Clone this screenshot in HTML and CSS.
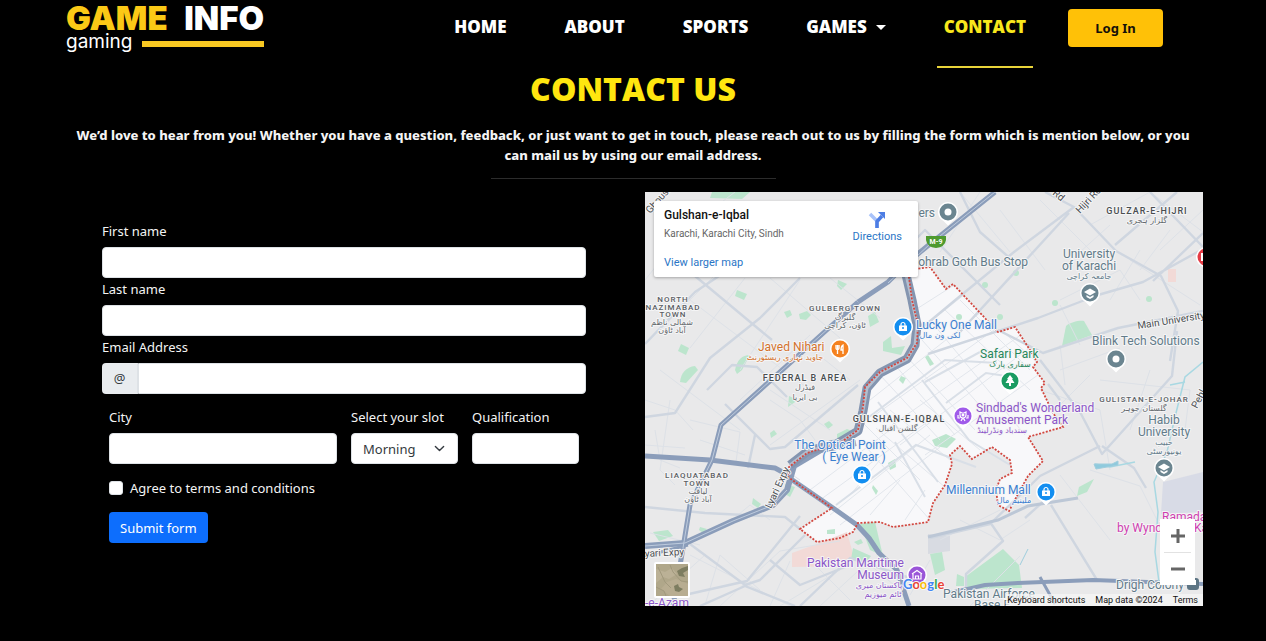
FILE: index.html
```html
<!DOCTYPE html>
<html lang="en">
<head>
<meta charset="utf-8">
<title>Game Info - Contact</title>
<meta name="viewport" content="width=device-width, initial-scale=1">
<link rel="stylesheet" href="styles.css">
</head>
<body>
<header class="site-header">
  <a class="logo" href="#">
    <span class="logo-name"><span class="logo-gold">GAME</span> <span>INFO</span></span>
    <span class="logo-sub"><span>gaming</span><span class="logo-bar"></span></span>
  </a>
  <nav class="nav">
    <a class="nav-link" href="#">HOME</a>
    <a class="nav-link" href="#">ABOUT</a>
    <a class="nav-link" href="#">SPORTS</a>
    <a class="nav-link" href="#">GAMES<span class="caret"></span></a>
    <a class="nav-link active" href="#">CONTACT</a>
  </nav>
  <button class="login" type="button">Log In</button>
</header>

<main class="container">
  <h1 class="title">CONTACT US</h1>
  <p class="lead">We’d love to hear from you! Whether you have a question, feedback, or just want to get in touch, please reach out to us by filling the form which is mention below, or you can mail us by using our email address.</p>
  <hr class="rule">

  <div class="columns">
    <form class="form">
      <label class="label" for="first">First name</label>
      <input class="control" id="first" type="text">
      <label class="label" for="last">Last name</label>
      <input class="control" id="last" type="text">
      <label class="label" for="email">Email Address</label>
      <div class="input-group">
        <span class="addon">@</span>
        <input class="control" id="email" type="text">
      </div>
      <div class="row">
        <div class="cell">
          <label class="label" for="city">City</label>
          <input class="control" id="city" type="text">
        </div>
        <div class="cell">
          <label class="label" for="slot">Select your slot</label>
          <div class="select-wrap">
            <select class="control select" id="slot"><option>Morning</option><option>Evening</option></select>
            <svg class="chevron" viewBox="0 0 16 16" aria-hidden="true"><path d="m2 5 6 6 6-6" fill="none" stroke="#343a40" stroke-width="2" stroke-linecap="round" stroke-linejoin="round"/></svg>
          </div>
        </div>
        <div class="cell">
          <label class="label" for="qual">Qualification</label>
          <input class="control" id="qual" type="text">
        </div>
      </div>
      <div class="check">
        <input class="checkbox" id="agree" type="checkbox">
        <label for="agree">Agree to terms and conditions</label>
      </div>
      <button class="submit" type="submit">Submit form</button>
    </form>

    <section class="map" aria-label="Map">
      <svg class="map-canvas" viewBox="645 192 558 414" preserveAspectRatio="xMidYMid slice">
        <defs>
          <clipPath id="area"><path d="M908 270 930 267 946 289 953 284 998 332 1015 327 1030 350 1037 362 1033 367 1045 383 1041 388 1053 413 1063 427 1028 437 1043 461 1028 476 1018 494 1009 511 998 505 996 490 1000 479 1012 473 1010 460 992 447 972 459 960 446 950 455 952 464 945 485 933 503 928 522 893 527 880 522 858 523 853 532 840 538 817 542 800 529 832 508 788 477 789 467 807 453 840 443 858 430 863 407 865 387 880 372 907 358 917 343 918 325 912 300Z"/></clipPath>
          <g id="pin"><path d="M0 13.500-4.500 9A10 10 0 1 1 4.500 9Z" fill="#fff"/><circle r="8.500"/></g>
        </defs>
        <rect x="645" y="192" width="558" height="414" fill="#e9e9ea"/>
        <g clip-path="url(#area)"><rect x="780" y="260" width="300" height="290" fill="#f8f8fa"/></g>

        <g fill="#f2dad7">
          <path d="m792 553 25-9 30-12 6 22-3 12-58 1Z"/>
          <path d="m1168 269 8 0 0 13-8 0Z"/>
        </g>
        <path d="m1163 482 40-10v40l-42 2Z" fill="#d8dbe6"/>
        <path d="m928 534 22 2v15l-22 3Z" fill="#d8dbe2"/>
        <g fill="#bce5cd">
          <path d="m712 192 38 0-8 7-32-1Z"/><path d="m737 290 10 4-3 6-9-4Z"/><path d="m838 280 9 4-6 6-4-4Z"/>
          <path d="m799 314 8-3 4 4-5 5-6-1Z"/><path d="m868 316 7-4 4 10-9 5Z"/><path d="m681 344 8 4-3 7-8-4Z"/>
          <path d="m680 382c1-9 6-15 15-16l3 4-12 13Z"/><path d="m735 370c2-10 7-15 15-15l-8 15-5 4Z"/>
          <path d="m883 342 8-6 1 12 13-2-4 9-18-4Z"/><path d="m784 312 6-2 2 5-5 3Z"/><path d="m901 376 5 2-3 6-4-4Z"/>
          <path d="m770 433 4-3 3 4-6 4Z"/><path d="m789 396 9 4-10 7Z"/><path d="m824 424 5-3 4 4-5 4Z"/>
          <path d="m837 434 10-5 10 4-5 7-15-2Z"/><path d="m785 484 10 3-5 10-5-3Z"/><path d="m753 498 8 6-3 4-6-4Z"/>
          <path d="m653 532 15-2 5 6-14 5Z"/><path d="m700 527 7 2-4 4-4-3Z"/><path d="m888 463 7-4 1 8-6 3Z"/>
          <path d="m873 485 5 6-2 4-4-7Z"/><path d="m827 530 8-1v5h-8Z"/><path d="m860 524 15-2 8 34-13-6Z"/>
          <path d="m853 548 18 8-6 8-14-5Z"/><path d="m854 542 7-3 2 4-5 2Z"/><path d="m932 440 14-6 10 5-9 9-12-2Z"/>
          <path d="m928 355 6 9-4 2-5-9Z"/><path d="m1066 326c4-4 14-6 18-5l8 14-30 11Z"/><path d="m1079 487 15-8-7 13-10 4Z"/>
          <path d="m1003 549 16 16 3 23-55 1-2-12Z"/><path d="m930 554 12-2 3 18-10 5Z"/><path d="m957 574 7 3v9h-8Z"/>
          <circle cx="985" cy="285" r="3"/><circle cx="1016" cy="273" r="3"/><circle cx="1055" cy="303" r="3"/><circle cx="1149" cy="299" r="3"/><circle cx="959" cy="317" r="3"/><circle cx="1000" cy="317" r="3"/>
        </g>

        <g fill="none" stroke="#dde1e7" stroke-width="1">
          <path d="m645 280 40-50 50-38M660 330l60-60 60 5M690 300l120 90M745 278l-55 70M770 278l70 60M800 280l-60 90M830 278l50 40M660 370l80 60M800 340l50 40M770 390l60 40M740 400l70-65M770 445l90-65"/>
          <path d="m645 400 30 10 18 20M655 430l5 30 20 8M670 400l-10 70 15 15M645 445l40 3M690 420l50 12-4 30M700 440l45 15M770 400l30 20 15 20M800 480l-15-10M720 530l30-25 20 15M690 555l100 51M700 545l-50-12"/>
          <path d="m720 606 60-55 60-10M760 590l-40-35-15 50M770 606l20-45M810 560l40 40M840 570l-60 36M870 560l-50 46M900 590l-30-25M655 600l50-45M930 560l-20 35M940 540l60-30M970 606l50-50"/>
          <path d="m960 192 50 60M980 192l-40 60M1000 210l45 60M1040 200l60 60M1060 270l50-45M1110 300l30-50M1150 192l53 40M1160 250l43-40M1130 260l70 45M1090 225l60-33M1060 300l60-30 20 30M1060 305l20 40M1170 230l-30 40"/>
          <path d="m1060 370 60-22M1040 390l60 20 10 60M1100 380l90 10-5 40M1150 370l-20 60M1060 345l5 40M1055 410l35-35M1090 470l50 16 20 40M1110 540l-50-65M960 520l40 20 30-20"/>
        </g>
        <g clip-path="url(#area)" fill="none" stroke="#e2e6ec" stroke-width="1">
          <path d="m820 500 110-80M830 515l100-80M840 525l100-78M810 490l80-60M860 440l70 80M876 428l70 60M890 410l60 50M920 400l60 50M880 460l-30 35M900 480l-30 35M925 490l-20 30"/>
          <path d="m870 400 120-95M875 415l140-100M885 430l140-98M900 445l140-105M925 455l120-85M880 375l60 65M895 365l60 70M905 355l70 75M922 340l75 85M930 320l95 115M945 310l85 80M960 300l70 70M915 310l55-35M920 330l50-40M860 420l60 60M990 320l50 45"/>
        </g>

        <g fill="none" stroke="#cfd6e0" stroke-width="2.400" stroke-linejoin="round">
          <path d="m645 344 50-52 24-16M695 276l60 50 17 14M645 417l30-4 35-55 50-40 40-40M707 390l25-25 25 2 30 30M725 404l45 45 15-2 73-62M755 435l-7 33M645 507l60 6 80 4 15 12M800 516l-53 65-67 15"/>
          <path d="m690 544 55 41 15-5 45-45M745 586l50 20M745 586l-45 20M770 560l30 25 50-20M800 606l50-48 60 20"/>
          <path d="m1045 192 29 15 42 44 45 25 17 35-8 50M1074 207l-60 45-55 45-36 30M1069 213l-110 120M1203 249l-60 33-45 13-60 23-110 36M998 330l45 23 75-25 85-17M960 192l20 40 40 35M1153 281l50-48"/>
          <path d="m1115 245 62-53M1150 192l53 55M1000 305l-75-75-25 25"/>
          <path d="m1040 360 40 52 22 42 70-78 5-45M1100 446l-60 30-50 48-60 14M1102 446l32 22 12 20M1060 400l-12-16M990 522l13 19-37 33v20M1051 505l46 75M1045 500l-20 18"/>
        </g>
        <path d="m922 380 47 60 41 25M878 402l60 80M865 420l80-60 52 3M925 382l55-30M836 505l80-60 60 22M895 442l30 55M1006 376l-20-3-40 30" fill="none" stroke="#d9dfe7" stroke-width="2"/>
        <path d="m928 537 70-17 30-14 50-8" fill="none" stroke="#bcc7d6" stroke-width="3"/>
        <g fill="none" stroke="#8b9dba" stroke-width="5" stroke-linejoin="round">
          <path d="m858 302 30-20 20-20 22-18 65-52"/>
          <path d="m858 302-28 25L721 425 712 460 690 505 683 548 673 606"/>
          <path d="m645 456 65 4 65 8 13 7"/>
          <path d="m788 477 45 31 24 17 12 13 10 15 18 17 12 36"/>
          <path d="m645 546 40-3 48-22 40-16 14-15 7-24 27-16 35-7" stroke-width="6"/>
          <path d="m950 593 35-8 33-2 75-3 110 4" stroke-width="4"/>
          <path d="m1040 577 15 27M645 556l43-11" stroke-width="3"/>
        </g>
        <g fill="none" stroke="#becbdd" stroke-width="1">
          <path d="M830 327 721 425 712 460 690 505 683 548M888 283l42-39 65-52M645 546l40-3 48-22 40-16 14-15"/>
        </g>
        <path d="m903 262 9 38 5 25-2 20-8 14-27 14-13 15-4 23-5 20-20 12-30 8-18 14" fill="none" stroke="#8495b0" stroke-width="9" stroke-linejoin="round"/>
        <path d="m903 262 9 38 5 25-2 20-8 14-27 14-13 15-4 23-5 20-20 12-30 8-18 14" fill="none" stroke="#b3bece" stroke-width="3"/>
        <path d="m1203 362-18 15-10 40-8 35-13 30 4 30-3 40 4 30M1135 462l-25 5-15-3M1170 385l15-3" fill="none" stroke="#a8d8e2" stroke-width="1.500"/>
        <path d="m1094 464 18 0 6-3v4l-22 4ZM1020 565l8-16" fill="#8fcadd" stroke="#9fcddd"/>
        <path d="M908 270 930 267 946 289 953 284 998 332 1015 327 1030 350 1037 362 1033 367 1045 383 1041 388 1053 413 1063 427 1028 437 1043 461 1028 476 1018 494 1009 511 998 505 996 490 1000 479 1012 473 1010 460 992 447 972 459 960 446 950 455 952 464 945 485 933 503 928 522 893 527 880 522 858 523 853 532 840 538 817 542 800 529 832 508 788 477 789 467 807 453 840 443 858 430 863 407 865 387 880 372 907 358 917 343 918 325 912 300Z" fill="none" stroke="#d2473f" stroke-width="1.800" stroke-dasharray="2 1.500"/>

        <g class="district">
          <text x="673" y="302">NORTH</text><text x="673" y="310">NAZIMABAD</text><text x="673" y="317">TOWN</text>
          <text x="845" y="311">GULBERG TOWN</text>
          <text x="697" y="478">LIAQUATABAD</text><text x="697" y="486">TOWN</text>
          <text x="1144" y="402">GULISTAN-E-JOHAR</text>
        </g>
        <g class="district large">
          <text x="805" y="381">FEDERAL B AREA</text><text x="899" y="422">GULSHAN-E-IQBAL</text><text x="1147" y="214">GULZAR-E-HIJRI</text>
        </g>
        <g class="urdu">
          <text x="672" y="325">شمالی ناظم</text><text x="672" y="333">آباد ٹاؤن</text>
          <text x="845" y="320">گلبرگ</text><text x="845" y="328">ٹاؤن، کراچی</text>
          <text x="805" y="390">فیڈرل</text><text x="805" y="400">بی ایریا</text>
          <text x="898" y="431">گلشن اقبال</text><text x="1147" y="223">گلزار ہجری</text>
          <text x="1144" y="411">گلستان جوہر</text>
          <text x="698" y="494">لیاقت</text><text x="698" y="502">آباد ٹاؤن</text>
        </g>
        <g class="road">
          <text transform="translate(650 214) rotate(-48)">Ghousia</text>
          <text transform="translate(1052 194) rotate(40)">Rd</text>
          <text transform="translate(1080 214) rotate(-47)">Hijri Rd</text>
          <text transform="translate(1138 329) rotate(-9)">Main University</text>
          <text transform="translate(771 509) rotate(-65)">Lyari Expy</text>
          <text transform="translate(645 557) rotate(-3)">yari Expy</text>
          <text transform="translate(1197 409) rotate(-62)">Pehl</text>
        </g>
        <g class="place grey">
          <text x="935" y="217" text-anchor="end">ers</text><text x="1028" y="266" text-anchor="end">ohrab Goth Bus Stop</text>
          <text class="mid" x="1089" y="258">University</text><text class="mid" x="1089" y="270">of Karachi</text>
          <text x="1092" y="345">Blink Tech Solutions</text>
          <text class="mid" x="1164" y="424">Habib</text><text class="mid" x="1164" y="436">University</text>
          <text class="mid" x="989" y="598">Pakistan Airforce</text><text class="mid" x="992" y="609">Base F</text>
          <text x="1116" y="589">Drigh Colony</text>
        </g>
        <g class="place blue">
          <text x="916" y="329">Lucky One Mall</text><text class="mid" x="840" y="449">The Optical Point</text><text class="mid" x="854" y="461">( Eye Wear )</text>
          <text x="946" y="494">Millennium Mall</text>
        </g>
        <g class="place orange"><text x="758" y="351">Javed Nihari</text></g>
        <g class="place green"><text x="980" y="358">Safari Park</text></g>
        <g class="place purple">
          <text x="976" y="412">Sindbad's Wonderland</text><text x="976" y="424">Amusement Park</text>
          <text x="904" y="567" text-anchor="end">Pakistan Maritime</text><text x="904" y="579" text-anchor="end">Museum</text>
          <text x="645" y="607">-e-Azam</text>
        </g>
        <g class="place pink"><text x="1162" y="521">Ramada</text><text x="1117" y="532">by Wyndham</text><text x="1194" y="532">Ka</text></g>
        <g class="urdu">
          <text class="grey" x="1089" y="279">جامعہ کراچی</text><text class="blue" x="940" y="338">لکی ون مال</text>
          <text class="orange" x="785" y="360">جاوید نہاری ریسٹورنٹ</text><text class="green" x="1010" y="367">سفاری پارک</text>
          <text class="purple" x="1002" y="433">سندباد ونڈرلینڈ</text><text class="blue" x="1014" y="503">ملینیم مال</text>
          <text class="grey" x="1164" y="445">حبیب</text><text class="grey" x="1164" y="454">یونیورسٹی</text>
          <text class="purple" x="879" y="588">پاکستان میری</text><text class="purple" x="883" y="597">ٹائم میوزیم</text>
        </g>

        <g transform="translate(948 212)"><use href="#pin" fill="#6b8590"/><circle r="3.500" fill="#fff"/></g>
        <g transform="translate(1116 359)"><use href="#pin" fill="#6b8590"/><circle r="3.500" fill="#fff"/></g>
        <g transform="translate(1090 293)"><use href="#pin" fill="#6b8590"/><path d="m-6-1 6-3.500L6-1 0 2.500ZM-3.500 2v2L0 6l3.500-2V2L0 4Z" fill="#fff"/></g>
        <g transform="translate(1164 468)"><use href="#pin" fill="#6b8590"/><path d="m-6-1 6-3.500L6-1 0 2.500ZM-3.500 2v2L0 6l3.500-2V2L0 4Z" fill="#fff"/></g>
        <g transform="translate(903 327)"><use href="#pin" fill="#138ef0"/><path d="M-2-1v-1.500a2 2 0 0 1 4 0V-1" fill="none" stroke="#fff" stroke-width="1.200"/><path d="M-4-1.500h8V4h-8Z" fill="#fff"/><circle cy="1" r="1" fill="#138ef0"/></g>
        <g transform="translate(862 475)"><use href="#pin" fill="#138ef0"/><path d="M-2-1v-1.500a2 2 0 0 1 4 0V-1" fill="none" stroke="#fff" stroke-width="1.200"/><path d="M-4-1.500h8V4h-8Z" fill="#fff"/><circle cy="1" r="1" fill="#138ef0"/></g>
        <g transform="translate(1046 492)"><use href="#pin" fill="#138ef0"/><path d="M-2-1v-1.500a2 2 0 0 1 4 0V-1" fill="none" stroke="#fff" stroke-width="1.200"/><path d="M-4-1.500h8V4h-8Z" fill="#fff"/><circle cy="1" r="1" fill="#138ef0"/></g>
        <g transform="translate(840 349)"><use href="#pin" fill="#f58220"/><path d="M-4-4v3q0 1.500 1.500 1.500T-1-1v-3M-2.500-4v9M3 5v-9q-2 1-2 5h2" fill="none" stroke="#fff" stroke-width="1.300"/></g>
        <g transform="translate(1010 381)"><use href="#pin" fill="#1a9c62"/><path d="M0-6 3-2H2l2.500 4H1v3h-2V2h-3.500L-2-2h-1Z" fill="#fff"/></g>
        <g transform="translate(963 416)"><use href="#pin" fill="#a05bea"/><path d="M-3-4v3a3 3 0 0 0 6 0v-3L1-3h-2ZM-5-1v3h2M5-1v3H3M-2 5l1-2h2l1 2" fill="none" stroke="#fff" stroke-width="1.200"/><circle cy="-1" r="1.500" fill="#fff"/></g>
        <g transform="translate(917 575)"><use href="#pin" fill="#9a55d8"/><path d="m-5-1 5-3.500L5-1M-4-1v5h8v-5M-1.500 4V1h3v3" fill="none" stroke="#fff" stroke-width="1.200"/></g>
        <g transform="translate(1206 257)"><use href="#pin" fill="#e53b45"/><path d="M-5-4h3v8h-3Z" fill="#fff"/></g>
        <g transform="translate(1193 584)"><rect x="-6" y="-6" width="12" height="12" rx="3" fill="#5d7584"/><path d="M-3-4h6v5h-6Z" fill="#fff"/></g>
        <path d="M926 236h20v4q-1 7-10 8-9-1-10-8Z" fill="#4e9a2f"/>
        <text class="shield" x="936" y="244">M-9</text>
        <text class="google" x="903" y="589"><tspan fill="#4285f4">G</tspan><tspan fill="#ea4335">o</tspan><tspan fill="#fbbc05">o</tspan><tspan fill="#4285f4">g</tspan><tspan fill="#34a853">l</tspan><tspan fill="#ea4335">e</tspan></text>
      </svg>

      <div class="info">
        <div class="info-text">
          <strong>Gulshan-e-Iqbal</strong>
          <span>Karachi, Karachi City, Sindh</span>
          <a href="#">View larger map</a>
        </div>
        <a class="directions" href="#">
          <svg viewBox="0 0 18 18" aria-hidden="true"><path d="M2 3 9 10v7" fill="none" stroke="#a9c3fa" stroke-width="3.500"/><path d="M9 17v-6.500L14 5" fill="none" stroke="#4d7de4" stroke-width="3.500"/><path d="M10 1h7v7Z" fill="#4d7de4"/></svg>
          Directions
        </a>
      </div>

      <button class="satellite" type="button" aria-label="Satellite view">
        <svg viewBox="0 0 32 32"><rect width="32" height="32" fill="#b0a78a"/><path d="m0 5 9 3 7-4 5 6-8 5-6-2-7 6Z" fill="#bbb196"/><path d="m11 18 9-3 12 5v12H14l-9-7Z" fill="#b8ad91"/><path d="m21 7 5-3 6-2v4l-5 3 2 4-6-1Zm-3 15 4-2 1 3 4 2-4 3-4-1Z" fill="#7d7d60"/><path d="m0 23 8 4 2 5M14 1l3 7 8 9 7 1M2 3l7 15 6 6" fill="none" stroke="#a1997d"/></svg>
      </button>
      <div class="zoom">
        <button type="button" aria-label="Zoom in"><svg viewBox="0 0 16 16"><path d="M8 1v14M1 8h14" stroke="#666" stroke-width="3"/></svg></button>
        <button type="button" aria-label="Zoom out"><svg viewBox="0 0 16 16"><path d="M1 8h14" stroke="#666" stroke-width="3"/></svg></button>
      </div>
      <div class="credits"><button type="button">Keyboard shortcuts</button><span>Map data ©2024</span><a href="#">Terms</a></div>
    </section>
  </div>
</main>
</body>
</html>
```
FILE: styles.css
```css
* { box-sizing: border-box; }

body {
  margin: 0;
  background: #000;
  color: #f4f4f4;
  font-family: "Noto Sans", "Open Sans", sans-serif;
  font-size: 13px;
  line-height: 20px;
}

button, input, select { font: inherit; }
a { text-decoration: none; }

.site-header {
  display: flex;
  align-items: flex-start;
  padding: 0 103px 0 66px;
}

.logo {
  display: flex;
  flex-direction: column;
  width: 198px;
  color: #fff;
  font-family: Inter, sans-serif;
}
.logo-name {
  display: flex;
  justify-content: space-between;
  font-size: 33px;
  font-weight: 900;
  line-height: 36px;
}
.logo-gold { color: #fbc916; }
.logo-sub { display: flex; align-items: center; gap: 10px; font-size: 19px; line-height: 12px; }
.logo-bar { flex: 1; height: 6px; margin-top: 4px; background: #f8c822; }

.nav { display: flex; gap: 44px; margin: 0 35px 0 auto; }
.nav-link {
  display: flex;
  align-items: center;
  padding: 17px 7px 29px;
  border-bottom: 2px solid transparent;
  color: #fff;
  font-family: "Open Sans", sans-serif;
  font-size: 17px;
  font-weight: 800;
}
.nav-link.active { color: #f8e71c; border-color: #e9d43a; }
.caret {
  margin-left: 9px;
  border: 5px solid transparent;
  border-top-color: #fff;
  border-bottom: 0;
}

.login {
  width: 95px;
  height: 38px;
  margin-top: 9px;
  border: 0;
  border-radius: 4px;
  background: #ffc107;
  color: #14100a;
  font-weight: 700;
}

.container { max-width: 1140px; margin: 0 auto; }
.title {
  margin: 0;
  padding-top: 3px;
  color: #ffe60f;
  font-family: "Open Sans", sans-serif;
  font-size: 32px;
  font-weight: 800;
  line-height: 36px;
  text-align: center;
}
.lead { margin: 18px 0 0; padding: 0 7px; font-weight: 800; text-align: center; }
.rule { width: 25%; margin: 13px auto; border: 0; border-top: 1px solid #2c2c2c; }

.columns { display: grid; grid-template-columns: 1fr 1fr; gap: 24px; }
.form { padding: 29px 35px 0 39px; }
.label { display: block; margin-bottom: 6px; }
.control {
  display: block;
  width: 100%;
  height: 31px;
  margin-bottom: 1px;
  padding: 0 11px;
  border: 1px solid #dee2e6;
  border-radius: 4px;
  background: #fff;
  color: #343a40;
}
.input-group { display: flex; }
.input-group .control { border-radius: 0 4px 4px 0; }
.addon {
  flex: none;
  width: 36px;
  height: 31px;
  border-right: 1px solid #dee2e6;
  border-radius: 4px 0 0 4px;
  background: #e9ecef;
  color: #343a40;
  line-height: 31px;
  text-align: center;
}
.row { display: grid; grid-template-columns: 2fr 1fr 1fr; margin-top: 12px; }
.cell { min-width: 0; padding: 0 7px; white-space: nowrap; }
.select-wrap { position: relative; }
.select { appearance: none; }
.chevron { position: absolute; top: 10px; right: 13px; width: 11px; height: 11px; pointer-events: none; }
.check { display: flex; align-items: center; gap: 7px; margin: 13px 7px 0; }
.checkbox {
  appearance: none;
  width: 14px;
  height: 14px;
  margin: 0;
  border: 1px solid #dee2e6;
  border-radius: 3px;
  background: #fff;
}
.submit {
  height: 31px;
  margin: 14px 7px 0;
  padding: 0 11px;
  border: 0;
  border-radius: 4px;
  background: #0d6efd;
  color: #fff;
}

.map { position: relative; align-self: start; overflow: hidden; font-family: Roboto, sans-serif; }
.map-canvas { display: block; width: 100%; }
.map-canvas text { paint-order: stroke; stroke: #f5f5f6; stroke-width: 2px; stroke-linejoin: round; }
.district text { fill: #5b6064; font-size: 8px; font-weight: 500; letter-spacing: 1px; text-anchor: middle; }
.district.large text { fill: #494d50; font-size: 9px; }
.urdu text { fill: #63686c; font-family: "DejaVu Sans", sans-serif; font-size: 8px; text-anchor: middle; }
.road text { fill: #4b4f52; font-size: 10px; }
.place text { font-size: 12px; }
.place .mid { text-anchor: middle; }
.grey text, .urdu .grey { fill: #627b89; }
.blue text, .urdu .blue { fill: #3b7fd0; }
.orange text, .urdu .orange { fill: #d3722c; }
.green text, .urdu .green { fill: #26875b; }
.purple text, .urdu .purple { fill: #8b55c8; }
.pink text { fill: #cf3fb0; }
.map-canvas .shield { fill: #fff; stroke: none; font-size: 7px; font-weight: 700; text-anchor: middle; }
.map-canvas .google { font-family: Lato, sans-serif; font-size: 13px; font-weight: 700; }

.info {
  position: absolute;
  top: 9px;
  left: 9px;
  display: flex;
  justify-content: space-between;
  width: 264px;
  padding: 7px 16px 7px 10px;
  border-radius: 2px;
  background: #fff;
  box-shadow: 0 1px 3px rgba(0, 0, 0, .3);
  color: #666;
  font-size: 10px;
  line-height: 14px;
}
.info-text { display: flex; flex-direction: column; }
.info strong { margin-bottom: 5px; color: #111; font-size: 12px; font-weight: 500; }
.info a { color: #2a76c6; }
.info-text a { margin-top: 15px; font-size: 11px; }
.directions { display: flex; flex-direction: column; align-items: center; gap: 1px; padding-top: 3px; font-size: 11px; }
.directions svg { width: 18px; height: 18px; }

.satellite {
  position: absolute;
  bottom: 8px;
  left: 9px;
  width: 36px;
  height: 36px;
  padding: 0;
  border: 2px solid #fff;
  border-radius: 2px;
  background: #aaa184;
}
.satellite svg { display: block; }

.zoom {
  position: absolute;
  right: 8px;
  bottom: 21px;
  width: 35px;
  background: #fff;
}
.zoom button {
  display: grid;
  place-items: center;
  width: 27px;
  height: 33px;
  margin: 0 auto;
  padding: 0;
  border: 0;
  background: none;
}
.zoom button + button { border-top: 1px solid #e2e2e2; }
.zoom svg { width: 16px; height: 16px; }

.credits {
  position: absolute;
  right: 0;
  bottom: 0;
  display: flex;
  gap: 10px;
  padding: 0 5px 0 1px;
  background: rgba(245, 245, 245, .75);
  color: #111;
  font-size: 9px;
  line-height: 12px;
}
.credits button { padding: 0; border: 0; background: none; color: inherit; }
.credits a { color: inherit; }
```
